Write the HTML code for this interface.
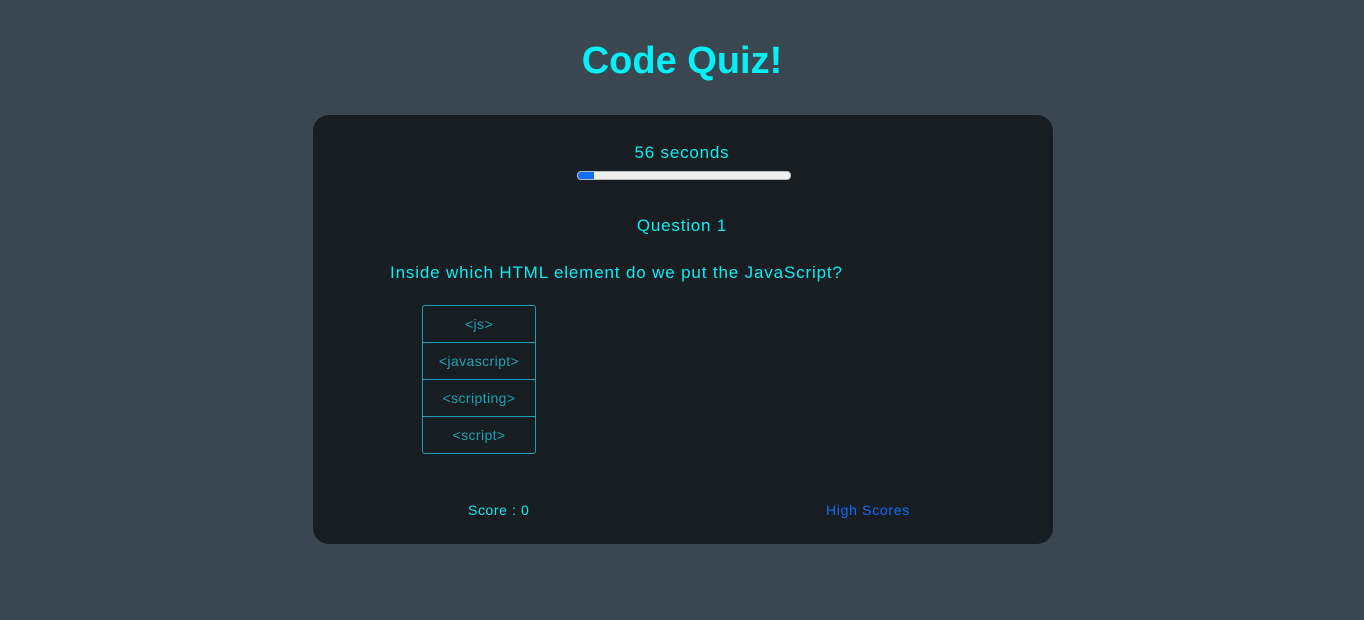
<!DOCTYPE html>
<html><head><style>
body{margin:0;width:1364px;height:620px;background:#3a4750;font-family:"Liberation Sans",sans-serif;position:relative;overflow:hidden}
.a{position:absolute}
h1{position:absolute;top:40px;left:0;width:1364px;text-align:center;margin:0;color:#00f0f8;font-size:38px;font-weight:bold}
.card{position:absolute;left:313px;top:115px;width:740px;height:429px;background:#181d21;border-radius:16px}
.t{color:#00eef5;text-align:center;width:1364px;left:0;letter-spacing:0.8px}
.bar{left:577px;top:171px;width:212px;height:7px;background:#eee;border:1px solid #bbb;border-radius:4px;overflow:hidden}
.bar div{width:16px;height:100%;background:#0d6efd}
.opts{left:422px;top:305px;width:112px;border:1px solid #17a2b8;border-radius:3px}
.opts div{height:36px;line-height:37px;text-align:center;color:#17a2b8;font-size:14px;border-top:1px solid #17a2b8;letter-spacing:0.4px}
.opts div:first-child{border-top:none}
</style></head><body>
<h1>Code Quiz!</h1>
<div class="card"></div>
<div class="a t" style="top:143px;font-size:17px">56 seconds</div>
<div class="a bar"><div></div></div>
<div class="a t" style="top:216px;font-size:17px">Question 1</div>
<div class="a" style="left:390px;top:263px;font-size:17px;color:#00eef5;letter-spacing:0.85px">Inside which HTML element do we put the JavaScript?</div>
<div class="a opts"><div>&lt;js&gt;</div><div>&lt;javascript&gt;</div><div>&lt;scripting&gt;</div><div>&lt;script&gt;</div></div>
<div class="a" style="left:468px;top:502px;font-size:14px;color:#00eef5;letter-spacing:0.6px">Score : 0</div>
<div class="a" style="left:826px;top:502px;font-size:14px;color:#0d6efd;letter-spacing:0.7px">High Scores</div>
</body></html>
